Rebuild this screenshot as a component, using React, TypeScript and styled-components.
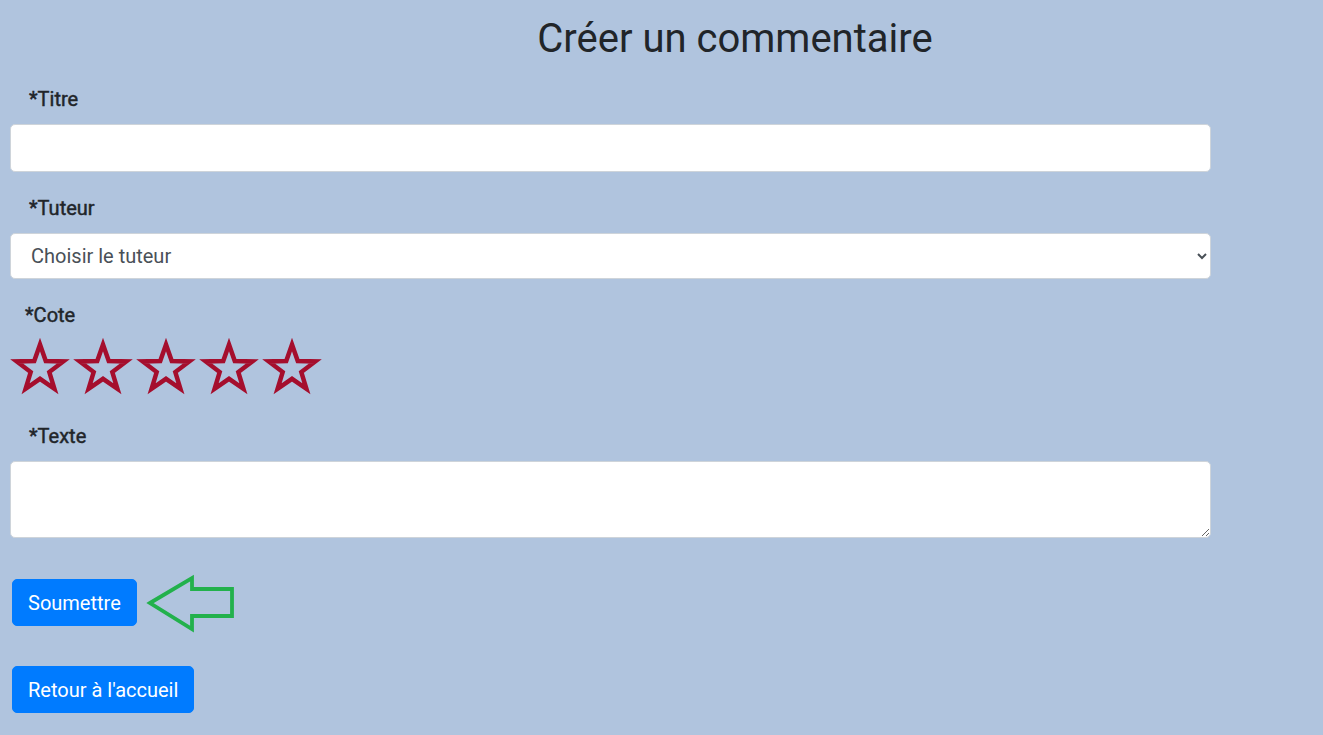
import { createGlobalStyle, styled } from "styled-components";

const GlobalStyle = createGlobalStyle`
  body {
    margin: 0;
    background: #b0c4de;
    font-family: Roboto, "Liberation Sans", sans-serif;
    color: #212529;
  }
`;

const Page = styled.main`
  padding: 15px 0 20px;
`;

const Title = styled.h1`
  margin: 0;
  padding-left: 147px;
  text-align: center;
  font-size: 40px;
  font-weight: 400;
  line-height: 48px;
`;

const Form = styled.form`
  width: 1201px;
  padding-left: 10px;
`;

const Field = styled.div<{ $gap?: number }>`
  margin-top: ${(p) => p.$gap ?? 19}px;
`;

const Label = styled.label<{ $indent?: number }>`
  display: block;
  padding: 2px 0 0 ${(p) => p.$indent ?? 19}px;
  margin-bottom: 10px;
  font-size: 20px;
  font-weight: 400;
  line-height: 30px;
  -webkit-text-stroke: 0.45px currentColor;
`;

const controlBase = `
  display: block;
  box-sizing: border-box;
  width: 100%;
  border: 1px solid #ced4da;
  border-radius: 5px;
  background: #fff;
  font-family: Roboto, "Liberation Sans", sans-serif;
  font-size: 20px;
  color: #495057;
  outline: none;
`;

const Input = styled.input`
  ${controlBase}
  height: 48px;
  padding: 8px 16px;
`;

const Select = styled.select`
  ${controlBase}
  height: 46px;
  padding: 6px 12px 6px 16px;
`;

const TextArea = styled.textarea`
  ${controlBase}
  height: 77px;
  padding: 8px 16px;
`;

const Stars = styled.div`
  display: flex;
  gap: 3px;
  margin-top: -2px;
`;

const StarIcon = styled.svg`
  display: block;
  overflow: visible;
`;

const ButtonRow = styled.div<{ $top: number }>`
  display: flex;
  align-items: center;
  gap: 7px;
  margin-top: ${(p) => p.$top}px;
  padding-left: 2px;
`;

const Button = styled.button`
  height: 47px;
  padding: 0 15px;
  border: 1px solid #007bff;
  border-radius: 5px;
  background: #007bff;
  color: #fff;
  font-family: Roboto, "Liberation Sans", sans-serif;
  font-size: 20px;
  line-height: 30px;
  cursor: pointer;
`;

const ArrowIcon = styled.svg`
  display: block;
  margin: -7px 0;
`;

const starPoints = (() => {
  const cx = 30;
  const cy = 31;
  const R = 24.5;
  const r = R * 0.4;
  const pts: string[] = [];
  for (let i = 0; i < 10; i++) {
    const rad = i % 2 === 0 ? R : r;
    const a = (-90 + i * 36) * (Math.PI / 180);
    pts.push(`${(cx + rad * Math.cos(a)).toFixed(2)},${(cy + rad * Math.sin(a)).toFixed(2)}`);
  }
  return pts.join(" ");
})();

const Star = () => (
  <StarIcon width="60" height="58" viewBox="0 0 60 58">
    <polygon
      points={starPoints}
      fill="none"
      stroke="#a50e2d"
      strokeWidth="4.5"
      strokeLinejoin="miter"
    />
  </StarIcon>
);

const Arrow = () => (
  <ArrowIcon width="92" height="60" viewBox="0 0 92 60">
    <polygon
      points="6,30 48,5 48,16 88,16 88,43 48,43 48,56"
      fill="none"
      stroke="#22b14c"
      strokeWidth="3.8"
      strokeLinejoin="miter"
    />
  </ArrowIcon>
);

export default function App() {
  return (
    <>
      <GlobalStyle />
      <Page>
        <Title>Créer un commentaire</Title>
        <Form onSubmit={(e) => e.preventDefault()}>
          <Field>
            <Label>*Titre</Label>
            <Input type="text" />
          </Field>
          <Field>
            <Label>*Tuteur</Label>
            <Select defaultValue="">
              <option value="">Choisir le tuteur</option>
            </Select>
          </Field>
          <Field>
            <Label $indent={15}>*Cote</Label>
            <Stars>
              {[1, 2, 3, 4, 5].map((n) => (
                <Star key={n} />
              ))}
            </Stars>
          </Field>
          <Field $gap={23}>
            <Label>*Texte</Label>
            <TextArea />
          </Field>
          <ButtonRow $top={41}>
            <Button type="submit">Soumettre</Button>
            <Arrow />
          </ButtonRow>
          <ButtonRow $top={40}>
            <Button type="button">Retour à l'accueil</Button>
          </ButtonRow>
        </Form>
      </Page>
    </>
  );
}
